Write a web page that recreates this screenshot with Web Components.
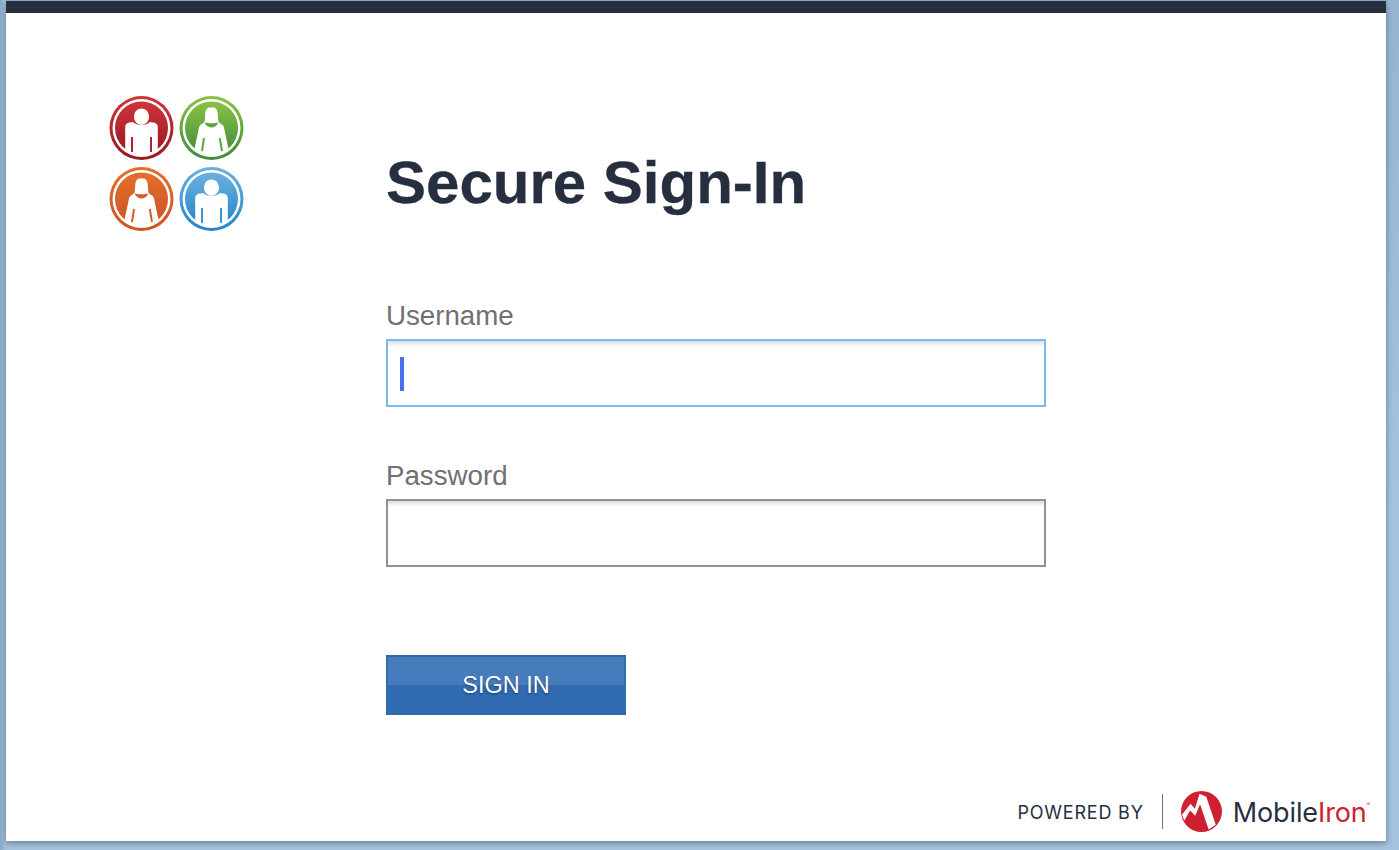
<!DOCTYPE html>
<html lang="en">
<head>
<meta charset="utf-8">
<title>Secure Sign-In</title>
<style>
  html, body { margin: 0; height: 100%; }
  body {
    background: #a9c3dc;
    font-family: "Liberation Sans", Arial, sans-serif;
    overflow: hidden;
  }
</style>
</head>
<body>
<signin-page>
  <app-logo slot="logo"></app-logo>
  <signin-form slot="form" heading="Secure Sign-In">
    <form-field label="Username" focused></form-field>
    <form-field label="Password"></form-field>
    <signin-button>SIGN IN</signin-button>
  </signin-form>
  <powered-by slot="footer"></powered-by>
</signin-page>

<script>
const person = (fill, female) => female
  ? `<path fill="#fff" d="M-6.300 -13 C-6.300 -18.500 -4 -20.500 -2 -20.500 H2 C4 -20.500 6.300 -18.500 6.300 -13 L6.800 -7 C7 -5.500 9 -4.500 10.500 -3.500 C12 -2.500 12.500 -1 13 2 L19 30 H-19 L-13 2 C-12.500 -1 -12 -2.500 -10.500 -3.500 C-9 -4.500 -7 -5.500 -6.800 -7 Z"/>
     <path fill="${fill}" d="M-7 -5.500 C-4 -4.500 4 -4.500 7 -5.500 C5.500 -2 2.500 -.5 0 -.5 C-2.500 -.5 -5.500 -2 -7 -5.500 Z"/>
     <path stroke="${fill}" stroke-width="2" fill="none" d="M-7.500 10 L-9.500 23 M8.300 10 L10.500 23"/>`
  : `<ellipse fill="#fff" cx="0" cy="-11.300" rx="7.600" ry="8.300"/>
     <path fill="#fff" d="M-16.300 -1 C-16.300 -4 -14 -5.500 -11 -5.500 L-8.500 -6 C-4.500 -2 4.500 -2 8.500 -6 L11 -5.500 C14 -5.500 16.300 -4 16.300 -1 V30 H-16.300 Z"/>
     <path stroke="${fill}" stroke-width="2" fill="none" d="M-9.500 9 V24 M9.500 9 V24"/>`

const badge = (id, x, y, top, bottom, mid, female) => `
  <defs>
    <linearGradient id="${id}" x1="0" y1="0" x2="0" y2="1">
      <stop offset="0" stop-color="${top}"/><stop offset="1" stop-color="${bottom}"/>
    </linearGradient>
    <clipPath id="${id}c"><circle r="28"/></clipPath>
  </defs>
  <g transform="translate(${x} ${y})">
    <circle r="32" fill="url(#${id})"/>
    <circle r="29" fill="#fff"/>
    <circle r="26.500" fill="url(#${id})"/>
    <g clip-path="url(#${id}c)">${person(mid, female)}</g>
  </g>`

const logoTemplate = document.createElement('template')
logoTemplate.innerHTML = `
  <style>
    :host { display: block; width: 135px; height: 135px; }
    svg { display: block; }
  </style>
  <svg width="135" height="135" viewBox="0 0 135 135" role="img" aria-label="Logo">
    ${badge('r', 32.500, 32, '#d2333b', '#951a20', '#b3222a', false)}
    ${badge('g', 102.500, 32, '#8cc243', '#3f8d3d', '#5fa43f', true)}
    ${badge('o', 32.500, 103, '#e46f2c', '#cb5424', '#d65d26', true)}
    ${badge('b', 102.500, 103, '#6cb1de', '#2585cb', '#3b96d2', false)}
  </svg>`

class AppLogo extends HTMLElement {
  constructor () {
    super()
    this.attachShadow({ mode: 'open' })
    this.shadowRoot.appendChild(logoTemplate.content.cloneNode(true))
  }
}

const fieldTemplate = document.createElement('template')
fieldTemplate.innerHTML = `
  <style>
    :host { display: block; margin-bottom: 53px; }
    label {
      display: block;
      font-size: 27.700px;
      line-height: 32px;
      color: #717171;
      margin-bottom: 7px;
    }
    .box {
      box-sizing: border-box;
      position: relative;
      width: 660px;
      height: 68px;
      border: 2px solid #8a929b;
      background: linear-gradient(#dedede, #fff 6px);
    }
    :host([focused]) .box { border-color: #79bbee; }
    .caret { display: none; position: absolute; left: 12px; top: 16px; width: 4px; height: 34px; background: #4a6ef0; }
    :host([focused]) .caret { display: block; }
  </style>
  <label></label>
  <div class="box"><span class="caret"></span></div>`

class FormField extends HTMLElement {
  constructor () {
    super()
    this.attachShadow({ mode: 'open' })
    this.shadowRoot.appendChild(fieldTemplate.content.cloneNode(true))
    this.shadowRoot.querySelector('label').textContent = this.getAttribute('label')
  }
}

const buttonTemplate = document.createElement('template')
buttonTemplate.innerHTML = `
  <style>
    :host { display: block; width: 240px; margin-top: 88px; }
    button {
      display: block;
      box-sizing: border-box;
      width: 240px;
      height: 60px;
      padding: 0;
      border: 2px solid #306ab1;
      background: linear-gradient(#477cbc 0, #477cbc 28px, #306ab1 28px);
      color: #fff;
      font: 23.500px/56px "Liberation Sans", Arial, sans-serif;
      text-shadow: 0 1px 2px rgba(0, 0, 0, .45);
    }
  </style>
  <button type="button"><slot></slot></button>`

class SigninButton extends HTMLElement {
  constructor () {
    super()
    this.attachShadow({ mode: 'open' })
    this.shadowRoot.appendChild(buttonTemplate.content.cloneNode(true))
  }
}

const formTemplate = document.createElement('template')
formTemplate.innerHTML = `
  <style>
    :host { display: block; width: 660px; padding-top: 51px; }
    h1 {
      margin: 0 0 81px;
      font: bold 60px/72px "Liberation Sans", Arial, sans-serif;
      color: #262f3f;
      -webkit-text-stroke: .3px #262f3f;
    }
  </style>
  <h1></h1>
  <slot></slot>`

class SigninForm extends HTMLElement {
  constructor () {
    super()
    this.attachShadow({ mode: 'open' })
    this.shadowRoot.appendChild(formTemplate.content.cloneNode(true))
    this.shadowRoot.querySelector('h1').textContent = this.getAttribute('heading')
  }
}

const poweredTemplate = document.createElement('template')
poweredTemplate.innerHTML = `
  <style>
    :host {
      display: flex;
      align-items: center;
      height: 42px;
      color: #262f3f;
    }
    .by { font: 18px/24px Inter, "Liberation Sans", sans-serif; letter-spacing: .8px; padding-top: 3px; }
    .rule { width: 1px; height: 35px; background: #6d7480; margin: 0 18px; }
    svg { display: block; margin-right: 11px; }
    .brand { font: 400 27px/32px Inter, "Liberation Sans", sans-serif; letter-spacing: -.1px; padding-top: 3px; }
    .brand b { font-weight: 400; color: #cf2032; }
    sup { font-size: 5px; color: #cf2032; vertical-align: 16px; line-height: 0; }
  </style>
  <span class="by">POWERED BY</span>
  <span class="rule"></span>
  <svg width="41" height="41" viewBox="0 0 43 43" aria-hidden="true">
    <circle cx="21.500" cy="21.500" r="21.500" fill="#cf2032"/>
    <path fill="#fff" d="M1 25 L10 13.500 L14.500 18.500 L19.500 3 L26.500 6 L36.500 35.500 L29 40.500 L20 14 L15 26 L9.500 20.500 L3.500 31 Z"/>
  </svg>
  <span class="brand">Mobile<b>Iron</b><sup>®</sup></span>`

class PoweredBy extends HTMLElement {
  constructor () {
    super()
    this.attachShadow({ mode: 'open' })
    this.shadowRoot.appendChild(poweredTemplate.content.cloneNode(true))
  }
}

const pageTemplate = document.createElement('template')
pageTemplate.innerHTML = `
  <style>
    :host {
      display: block;
      box-sizing: border-box;
      height: 850px;
      padding: 1px 13px 9px 6px;
      background:
        linear-gradient(90deg, #8ba9c9 0, #a6c1dc 6px, transparent 6px),
        linear-gradient(#97b4d2, #a7c2dc 60%, #a6c2dc);
    }
    .card {
      box-sizing: border-box;
      height: 840px;
      display: flex;
      flex-direction: column;
      background: #fff;
      border-top: 12px solid #262f3f;
      box-shadow: 0 2px 6px rgba(50, 70, 95, .55);
    }
    .main { flex: 1; display: flex; padding: 83px 0 0 103px; }
    .logo { width: 277px; flex: none; }
    .foot { display: flex; justify-content: flex-end; padding: 0 16px 9px 0; }
  </style>
  <div class="card">
    <div class="main">
      <div class="logo"><slot name="logo"></slot></div>
      <slot name="form"></slot>
    </div>
    <div class="foot"><slot name="footer"></slot></div>
  </div>`

class SigninPage extends HTMLElement {
  constructor () {
    super()
    this.attachShadow({ mode: 'open' })
    this.shadowRoot.appendChild(pageTemplate.content.cloneNode(true))
  }
}

customElements.define('app-logo', AppLogo)
customElements.define('form-field', FormField)
customElements.define('signin-button', SigninButton)
customElements.define('signin-form', SigninForm)
customElements.define('powered-by', PoweredBy)
customElements.define('signin-page', SigninPage)
</script>
</body>
</html>
